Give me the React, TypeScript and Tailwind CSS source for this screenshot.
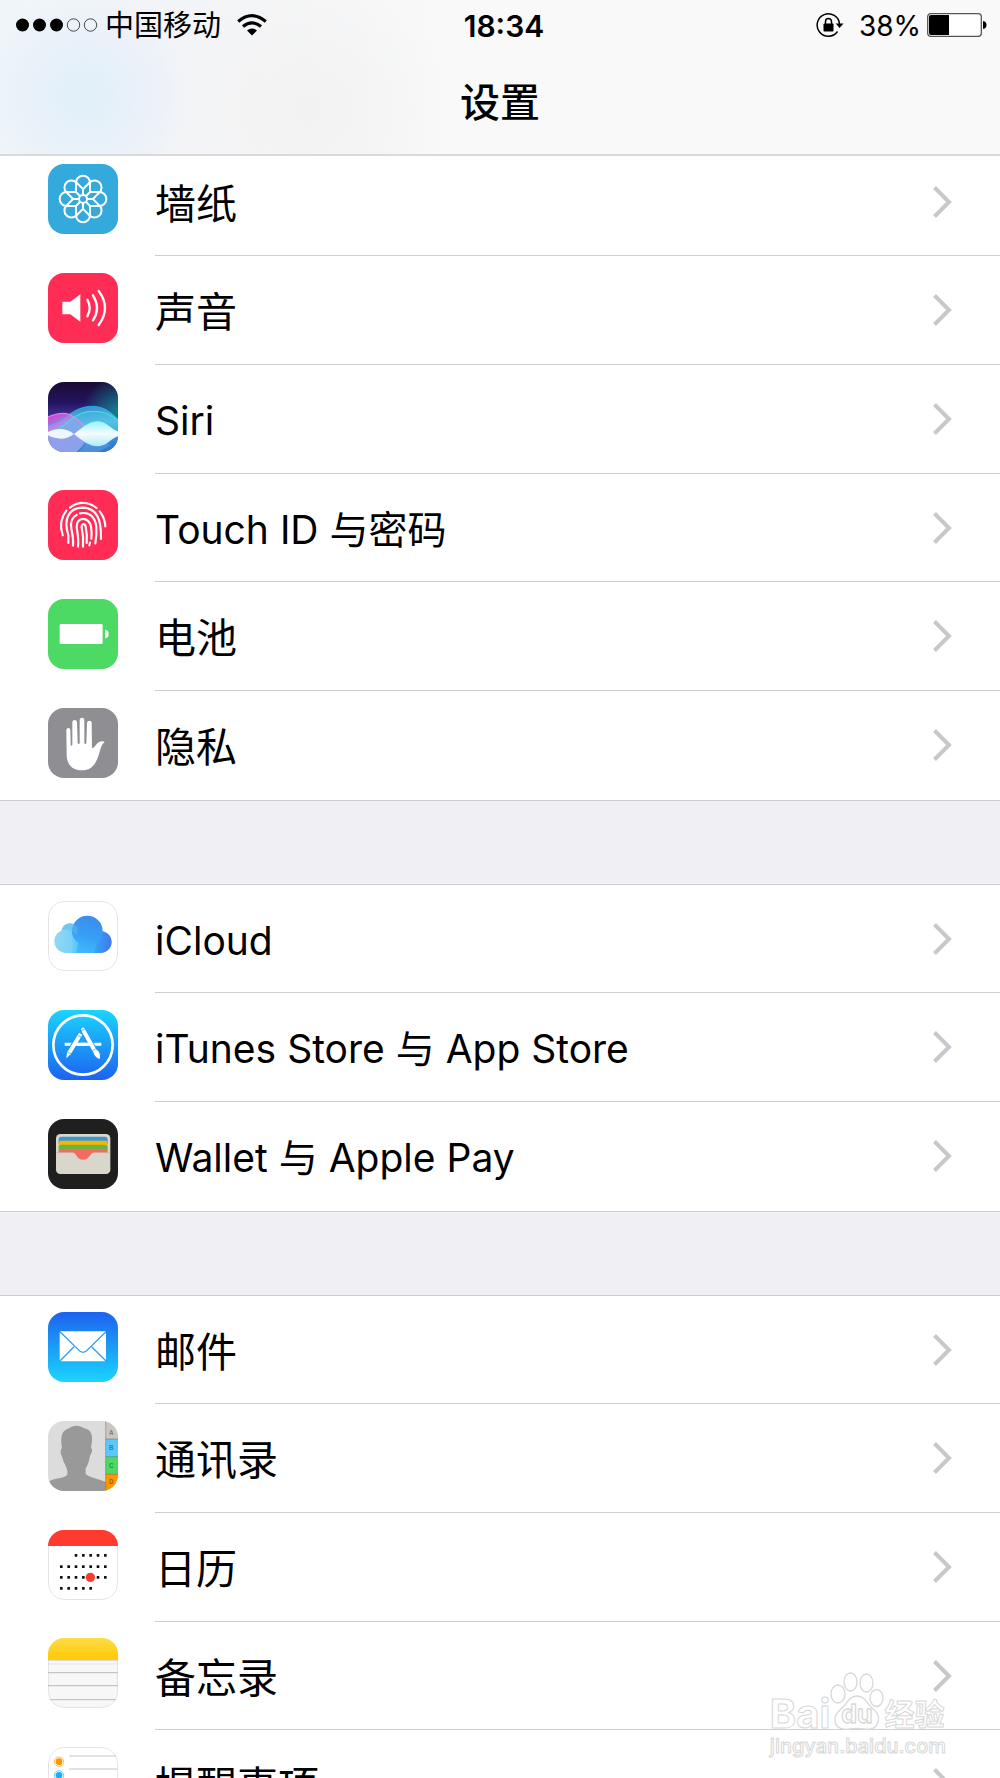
import type { ReactNode } from 'react';

const petals = [0, 45, 90, 135, 180, 225, 270, 315];

function Tile({ children }: { children: ReactNode }) {
  return (
    <svg viewBox="0 0 210 210" className="size-[70px] shrink-0 rounded-2xl" aria-hidden="true">
      {children}
    </svg>
  );
}

function TileOutline() {
  return <rect x="1.5" y="1.5" width="207" height="207" rx="47" fill="none" stroke="#e4e4e6" strokeWidth="3" />;
}

function WallpaperIcon() {
  return (
    <Tile>
      <rect width="210" height="210" fill="#34aadc" />
      <g transform="translate(105 105)" fill="none" stroke="#fff" strokeWidth="6">
        <circle r="12" />
        {petals.map((angle) => (
          <path key={angle} transform={`rotate(${angle})`} d="M-21 -21V-49A21 21 0 0 1 21 -49V-21M0 -30V-12" />
        ))}
      </g>
    </Tile>
  );
}

function SoundIcon() {
  return (
    <Tile>
      <rect width="210" height="210" fill="#ff2d55" />
      <path d="M43 86H67L97 64V146L67 124H43Z" fill="#fff" />
      <g fill="none" stroke="#fff" strokeWidth="7" strokeLinecap="round">
        <path d="M118 80Q132 105 118 130" />
        <path d="M135 67Q159 105 135 142" />
        <path d="M152 54Q190 105 152 156" />
      </g>
    </Tile>
  );
}

function SiriIcon() {
  return (
    <Tile>
      <defs>
        <linearGradient id="siri-sky" x1="0" y1="0" x2="0" y2="1">
          <stop offset="0" stopColor="#1a0a35" />
          <stop offset="0.3" stopColor="#231560" />
          <stop offset="0.55" stopColor="#4c3aa8" />
        </linearGradient>
        <radialGradient id="siri-teal" cx="1" cy="0.42" r="0.5">
          <stop offset="0" stopColor="#137f88" />
          <stop offset="1" stopColor="#137f88" stopOpacity="0" />
        </radialGradient>
        <linearGradient id="siri-pink" x1="0" y1="0" x2="0.6" y2="1">
          <stop offset="0" stopColor="#e63fd9" />
          <stop offset="0.4" stopColor="#b98ee8" />
          <stop offset="1" stopColor="#8a9aec" />
        </linearGradient>
        <linearGradient id="siri-blue" x1="0" y1="0" x2="0.2" y2="1">
          <stop offset="0" stopColor="#2a8ed6" />
          <stop offset="0.5" stopColor="#5ccbe8" />
          <stop offset="1" stopColor="#2c84cf" />
        </linearGradient>
        <linearGradient id="siri-wave" x1="0" y1="0" x2="0" y2="1">
          <stop offset="0" stopColor="#9af5ff" />
          <stop offset="0.5" stopColor="#fff" />
          <stop offset="1" stopColor="#b0f4fb" />
        </linearGradient>
      </defs>
      <rect width="210" height="210" fill="url(#siri-sky)" />
      <rect width="210" height="210" fill="url(#siri-teal)" />
      <path d="M0 130C50 118 75 74 130 73C170 73 190 92 210 112V210H0Z" fill="url(#siri-blue)" opacity="0.9" />
      <path d="M0 104C25 94 50 90 68 99C95 113 110 135 132 156C115 175 105 195 85 210H0Z" fill="url(#siri-pink)" opacity="0.85" />
      <path d="M0 157C50 130 70 90 125 88C165 87 185 97 210 112V157Z" fill="#49c4ec" opacity="0.4" />
      <path d="M82 157C110 165 115 185 85 210H0V157Z" fill="#8fa3ee" opacity="0.8" />
      <path d="M128 165C115 185 105 200 88 210H150L190 190Z" fill="#5f9ce3" opacity="0.6" />
      <path d="M0 130C50 118 75 74 130 73C170 73 190 92 210 112" fill="none" stroke="#35a5ed" strokeWidth="3" />
      <path d="M20 148C65 122 85 90 130 88C165 87 188 98 210 115" fill="none" stroke="#45e6d1" strokeWidth="3" />
      <path d="M0 105C25 94 50 90 68 99C95 113 110 135 132 156" fill="none" stroke="#f08bea" strokeWidth="3" />
      <path d="M78 156C115 127 130 117 151 118C176 119 192 144 210 148V163C190 168 178 192 150 193C125 193 105 178 78 156Z" fill="url(#siri-wave)" opacity="0.95" />
      <path d="M0 150C25 138 55 137 78 156C55 175 25 173 0 160Z" fill="#f3fbff" opacity="0.95" />
    </Tile>
  );
}

function TouchIdIcon() {
  return (
    <Tile>
      <rect width="210" height="210" fill="#ff2d55" />
      <g fill="none" stroke="#fff" strokeWidth="6.5" strokeLinecap="round">
        <path d="M66 53C90 34 121 34 146 54" />
        <path d="M55 62C39 82 35 108 44 136" />
        <path d="M155 64C166 77 171 92 172 109" />
        <path d="M61 159V135C48 96 55 54 104 53C148 54 160 90 159 147" />
        <path d="M75 167C77 145 73 130 70 116C66 91 75 80 86 75" />
        <path d="M96 70C127 64 142 84 145 110C146 130 145 145 142 160" />
        <path d="M90 170C93 145 88 128 86 112C84 78 124 79 129 110C132 128 131 137 130 146" />
        <path d="M126 158L124 166" />
        <path d="M105 170C107 145 104 126 101 112C99 101 111 99 113 110C117 130 117 150 116 159" />
      </g>
    </Tile>
  );
}

function BatteryIcon() {
  return (
    <Tile>
      <rect width="210" height="210" fill="#4cd964" />
      <rect x="35" y="75" width="129" height="60" rx="4" fill="#fff" />
      <path d="M171 92Q182 93 182 105T171 118Z" fill="#fff" />
    </Tile>
  );
}

function PrivacyIcon() {
  return (
    <Tile>
      <rect width="210" height="210" fill="#8e8e93" />
      <path
        d="M55 67C55 58 67 58 67 67L68 111Q70 115 73 111V43C73 34 87 34 87 43L89 106Q92 110 95 106V36C95 27 109 27 109 36V106Q112 110 115 106L117 45C118 36 131 36 131 45L132 119Q134 122 138 118L148 106C155 99 164 98 170 102C157 112 157 132 148 152C139 175 126 187 101 187C73 187 57 170 56 142Z"
        fill="#fff"
      />
    </Tile>
  );
}

function ICloudIcon() {
  return (
    <Tile>
      <defs>
        <linearGradient id="cloud-base" gradientUnits="userSpaceOnUse" x1="20" y1="0" x2="191" y2="0">
          <stop offset="0" stopColor="#92d8f6" />
          <stop offset="0.28" stopColor="#7bd1f7" />
          <stop offset="0.48" stopColor="#3fbcfb" />
          <stop offset="0.75" stopColor="#389af5" />
          <stop offset="1" stopColor="#4178ed" />
        </linearGradient>
        <linearGradient id="cloud-top" x1="0.6" y1="0" x2="0.35" y2="1">
          <stop offset="0" stopColor="#3b8cec" />
          <stop offset="0.55" stopColor="#389ff6" />
          <stop offset="1" stopColor="#40bafd" />
        </linearGradient>
      </defs>
      <rect width="210" height="210" fill="#fff" />
      <circle cx="66" cy="92" r="26" fill="#82d0f2" />
      <path d="M54 86A35 35 0 0 0 54 156H158A33 33 0 1 0 150 91Z" fill="url(#cloud-base)" />
      <path d="M72 90A46 46 0 1 1 164 90C164 105 158 118 148 126L138 156H84L92 126C80 118 72 106 72 90Z" fill="url(#cloud-top)" />
      <path d="M44 86C60 84 75 90 85 101C89 95 90 87 88 80A26 26 0 0 0 42 86Z" fill="#5abfea" opacity="0.5" />
      <TileOutline />
    </Tile>
  );
}

function AppStoreIcon() {
  return (
    <Tile>
      <defs>
        <linearGradient id="store" x1="0" y1="0" x2="0" y2="1">
          <stop offset="0" stopColor="#1ad5fd" />
          <stop offset="1" stopColor="#1d62f0" />
        </linearGradient>
      </defs>
      <rect width="210" height="210" fill="url(#store)" />
      <circle cx="105" cy="105" r="89" fill="none" stroke="#fff" strokeWidth="8" />
      <path d="M50 103H160" stroke="#fff" strokeWidth="9" />
      <path d="M97 71L66 125" stroke="#1c9cf8" strokeWidth="18" />
      <path d="M103 58L146 133" stroke="#1c9cf8" strokeWidth="18" />
      <path d="M80 103H126" stroke="#fff" strokeWidth="9" />
      <path d="M98 71L62 131" stroke="#fff" strokeWidth="12" />
      <path d="M57 126L68 132L55 145Z" fill="#fff" />
      <path d="M105 59L142 125" stroke="#fff" strokeWidth="12" strokeLinecap="round" />
      <path d="M137 128L149 121C157 130 157 140 155 147C147 145 140 139 137 128Z" fill="#fff" />
      <path d="M58 126L69 132M133 122L146 115M89 76L102 83M96 65L110 57" stroke="#1c96f7" strokeWidth="2" />
    </Tile>
  );
}

function WalletIcon() {
  return (
    <Tile>
      <rect width="210" height="210" fill="#1f1f1f" />
      <rect x="24" y="45" width="163" height="120" rx="13" fill="#d9d7cc" />
      <path d="M32 75V61Q32 53 40 53H171Q179 53 179 61V75Z" fill="#3a99d0" />
      <path d="M32 85V73Q32 65 40 65H171Q179 65 179 73V85Z" fill="#ffb100" />
      <path d="M32 96V85Q32 77 40 77H171Q179 77 179 85V96Z" fill="#5abe3c" />
      <path d="M32 101V97Q32 89 40 89H171Q179 89 179 97V101H136C127 101 124 122 105 122S84 101 76 101Z" fill="#f26d5f" />
      <path d="M24 101H76M136 101H187" stroke="#bdbbb0" strokeWidth="2" />
    </Tile>
  );
}

function MailIcon() {
  return (
    <Tile>
      <defs>
        <linearGradient id="mail" x1="0" y1="0" x2="0" y2="1">
          <stop offset="0" stopColor="#1d62f0" />
          <stop offset="1" stopColor="#1ad5fd" />
        </linearGradient>
      </defs>
      <rect width="210" height="210" fill="url(#mail)" />
      <rect x="35" y="58" width="139" height="90" rx="4" fill="#fff" />
      <g fill="none" stroke="#2f9df7" strokeWidth="4">
        <path d="M36 59L90 112Q105 130 120 112L174 59" />
        <path d="M36 147L78 104M174 147L131 104" />
      </g>
    </Tile>
  );
}

function ContactsIcon() {
  return (
    <Tile>
      <rect width="210" height="210" fill="#dcdcdc" />
      <path
        d="M0 183C20 170 48 173 57 162C61 153 57 144 51 130C45 122 45 112 41 104C35 91 39 84 42 81C36 43 43 28 63 22C76 11 96 12 108 22C133 26 136 47 129 80C136 87 130 96 126 105C123 121 120 132 113 142V159C124 170 150 173 173 183V210H0Z"
        fill="#999"
      />
      <path d="M173 0H210V54H173Z" fill="#cac7c1" />
      <path d="M173 54H210V107H173Z" fill="#5ac8fa" />
      <path d="M173 107H210V160H173Z" fill="#4cd964" />
      <path d="M173 160H210V210H173Z" fill="#ff9500" />
      <path d="M173 54H210M173 107H210M173 160H210M173 0V210" stroke="#00000038" strokeWidth="3" />
      <g fill="#00000066" fontFamily="Liberation Sans, sans-serif" fontWeight="700" fontSize="19" textAnchor="middle">
        <text x="190" y="41">A</text>
        <text x="190" y="88">B</text>
        <text x="190" y="140">C</text>
        <text x="190" y="188">D</text>
      </g>
    </Tile>
  );
}

function CalendarIcon() {
  const weeks = [
    { y: 76, from: 2, to: 6 },
    { y: 110, from: 0, to: 6 },
    { y: 142, from: 0, to: 6 },
    { y: 175, from: 0, to: 4 },
  ];
  return (
    <Tile>
      <rect width="210" height="210" fill="#fff" />
      <TileOutline />
      <rect width="210" height="48" fill="#ff3b30" />
      {weeks.map((week) =>
        [0, 1, 2, 3, 4, 5, 6]
          .filter((day) => day >= week.from && day <= week.to)
          .map((day) => (
            <rect key={`${week.y}-${day}`} x={36 + day * 22} y={week.y - 4} width="8" height="8" rx="1" fill="#111" />
          )),
      )}
      <circle cx="127" cy="142" r="14" fill="#ff3b30" />
    </Tile>
  );
}

function NotesIcon() {
  return (
    <Tile>
      <defs>
        <linearGradient id="notes" x1="0" y1="0" x2="0" y2="1">
          <stop offset="0" stopColor="#ffdc47" />
          <stop offset="1" stopColor="#fdc903" />
        </linearGradient>
      </defs>
      <rect width="210" height="210" fill="#f7f7f7" />
      <TileOutline />
      <rect width="210" height="65" fill="url(#notes)" />
      <path d="M0 66H210M0 104H210M0 143H210M0 185H210" stroke="#bbb" strokeWidth="3" />
      <path d="M3 78H210" stroke="#d4d4d4" strokeWidth="3" strokeDasharray="3 3" />
    </Tile>
  );
}

function RemindersIcon() {
  const dots = ['#ff9500', '#1badf8', '#63da38', '#cc73e1'];
  return (
    <Tile>
      <rect width="210" height="210" fill="#fff" />
      <TileOutline />
      {dots.map((color, i) => (
        <g key={color}>
          <circle cx="33" cy={44 + i * 41} r="10" fill={color} />
          <circle cx="33" cy={44 + i * 41} r="14" fill="none" stroke={color} strokeOpacity="0.6" strokeWidth="3" />
          <path d={`M63 ${27 + i * 39}H207`} stroke="#c4c4c4" strokeWidth="3" />
        </g>
      ))}
    </Tile>
  );
}

type Item = { label: string; icon: ReactNode };

const groups: Item[][] = [
  [
    { label: '墙纸', icon: <WallpaperIcon /> },
    { label: '声音', icon: <SoundIcon /> },
    { label: 'Siri', icon: <SiriIcon /> },
    { label: 'Touch ID 与密码', icon: <TouchIdIcon /> },
    { label: '电池', icon: <BatteryIcon /> },
    { label: '隐私', icon: <PrivacyIcon /> },
  ],
  [
    { label: 'iCloud', icon: <ICloudIcon /> },
    { label: 'iTunes Store 与 App Store', icon: <AppStoreIcon /> },
    { label: 'Wallet 与 Apple Pay', icon: <WalletIcon /> },
  ],
  [
    { label: '邮件', icon: <MailIcon /> },
    { label: '通讯录', icon: <ContactsIcon /> },
    { label: '日历', icon: <CalendarIcon /> },
    { label: '备忘录', icon: <NotesIcon /> },
    { label: '提醒事项', icon: <RemindersIcon /> },
  ],
];

function Row({ label, icon }: Item) {
  const size = /[A-Za-z]/.test(label) ? 'text-[39px]' : 'text-[41px]';
  return (
    <li className="group h-[109px] nth-[3n+1]:h-[108px]">
      <a href="#" className="flex h-full pl-12">
        <span className="flex items-center pb-1.5">{icon}</span>
        <span className="ml-[37px] flex min-w-0 flex-1 items-center justify-between border-b border-[#cfced3] pr-12 group-last:border-transparent">
          <span className={`${size} pt-1 leading-[60px] whitespace-nowrap`}>{label}</span>
          <svg viewBox="0 0 20 32" className="h-8 w-5 shrink-0" aria-hidden="true">
            <path d="M2.5 1.500L17 16L2.500 30.500" fill="none" stroke="#c7c7cc" strokeWidth="4" />
          </svg>
        </span>
      </a>
    </li>
  );
}

function StatusBar() {
  return (
    <div className="grid h-[50px] grid-cols-[1fr_auto_1fr] items-center leading-9">
      <div className="flex items-center pl-4">
        <svg viewBox="0 0 82 14" className="h-[14px] w-[82px]" aria-hidden="true">
          <circle cx="6.5" cy="7" r="6.5" />
          <circle cx="23.5" cy="7" r="6.5" />
          <circle cx="40.5" cy="7" r="6.5" />
          <circle cx="57.5" cy="7" r="6.2" fill="none" stroke="#222" strokeWidth="0.8" />
          <circle cx="74.5" cy="7" r="6.2" fill="none" stroke="#222" strokeWidth="0.8" />
        </svg>
        <span className="ml-[7px] pt-0.5 text-[29px]">中国移动</span>
        <svg viewBox="0 0 30 22" className="ml-4 h-[22px] w-[30px]" aria-hidden="true">
          <g fill="none" stroke="#000" strokeWidth="3.2">
            <path d="M1.2 7.4Q15 -4 28.8 7.4" />
            <path d="M6 12.6Q15 5.2 24 12.6" />
          </g>
          <path d="M10 16.5Q15 12.500 20 16.5L15 21.5Z" />
        </svg>
      </div>
      <span className="pt-0.5 pl-2 text-[30px] font-semibold">18:34</span>
      <div className="flex items-center justify-end pr-[13px]">
        <svg viewBox="0 0 28 26" className="h-[26px] w-7" aria-hidden="true">
          <path d="M21.5 19.5A11.2 11.2 0 1 1 23.5 12" fill="none" stroke="#000" strokeWidth="1.5" />
          <path d="M19.8 11.5H27.5L23.6 16Z" />
          <rect x="7.5" y="11.5" width="10" height="8" rx="0.8" />
          <path d="M9.5 12V9.5A3 3 0 0 1 15.5 9.5V12" fill="none" stroke="#000" strokeWidth="1.5" />
        </svg>
        <span className="ml-[15px] pt-0.5 text-[28px]">38%</span>
        <svg viewBox="0 0 60 24" className="ml-1.5 h-6 w-[60px]" aria-hidden="true">
          <rect x="0.7" y="0.7" width="53.6" height="22.6" rx="3" fill="#fff" stroke="#555" strokeWidth="1.3" />
          <path d="M2 4Q2 2 4 2H22V22H4Q2 22 2 20Z" />
          <path d="M56 8Q59.5 8.5 59.5 12T56 16Z" />
        </svg>
      </div>
    </div>
  );
}

function Watermark() {
  return (
    <div className="pointer-events-none absolute right-[54px] bottom-5 text-white [-webkit-text-stroke:1px_#d8d8d8]">
      <div className="flex items-end">
        <span className="text-[40px] leading-10 font-bold">Bai</span>
        <svg viewBox="0 0 54 58" className="mb-1 h-[58px] w-[54px]" aria-hidden="true">
          <g fill="#fff" stroke="#d8d8d8" strokeWidth="1.3">
            <ellipse cx="8" cy="22" rx="7" ry="9" />
            <ellipse cx="20.5" cy="10" rx="6.5" ry="9" />
            <ellipse cx="36.5" cy="11" rx="6.5" ry="9" />
            <ellipse cx="46.5" cy="26" rx="6.5" ry="8.5" />
            <path d="M27 24C34 24 36 30 41 35C47 40 50 44 48 50C46 57 40 58 34 57C29 56 25 56 20 57C13 58 7 57 5 50C4 43 8 40 13 35C18 30 20 24 27 24Z" />
            <text x="27" y="51" textAnchor="middle" fontSize="25" fontWeight="700">
              du
            </text>
          </g>
        </svg>
        <span className="text-[30px] leading-10 font-bold">经验</span>
      </div>
      <div className="text-[20px] leading-6 font-medium">jingyan.baidu.com</div>
    </div>
  );
}

export default function App() {
  return (
    <div className="relative h-screen overflow-hidden bg-[#efeff4] font-[Inter,'Noto_Sans_CJK_SC',sans-serif] text-black">
      <header className="relative z-10 border-b-2 border-[#dadada] bg-[#f9f9f9] bg-[radial-gradient(circle_at_85px_95px,#e0f0f9_0,#e8f0f9cc_60px,transparent_105px),radial-gradient(circle_at_310px_110px,#f2f2f2_0,transparent_140px),linear-gradient(90deg,#eff6f9,#f3f4f7_18%,#f9f9f9_45%)]">
        <StatusBar />
        <h1 className="h-[104px] text-center text-[40px] leading-[106px] font-medium">设置</h1>
      </header>
      <main className="-mt-[9px] flex flex-col gap-[83px]">
        {groups.map((group) => (
          <ul key={group[0].label} className="border-y border-[#cfced3] bg-white">
            {group.map((item) => (
              <Row key={item.label} {...item} />
            ))}
          </ul>
        ))}
      </main>
      <Watermark />
    </div>
  );
}
